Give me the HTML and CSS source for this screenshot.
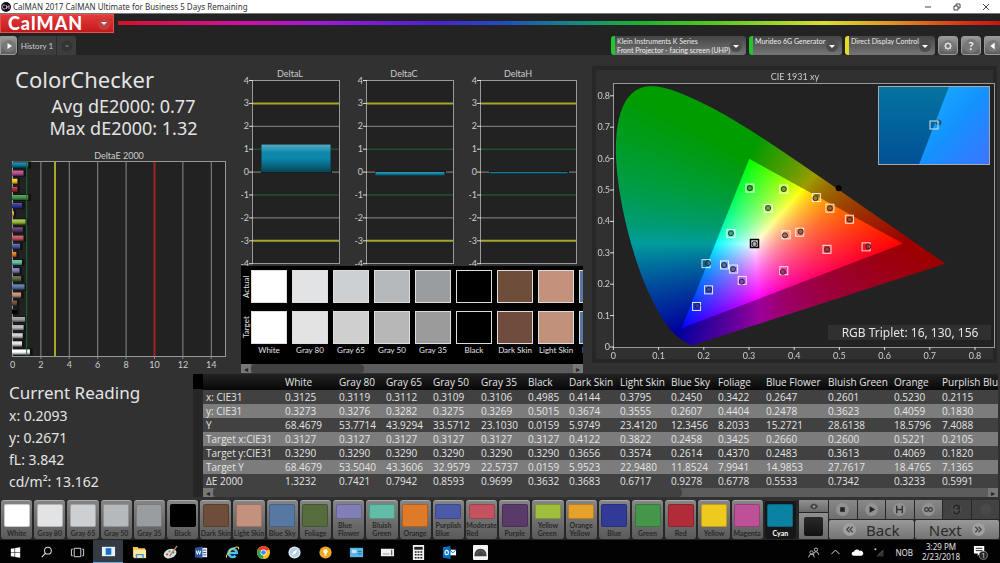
FILE: index.html
```
<!DOCTYPE html>
<html lang="en">
<head>
<meta charset="utf-8">
<title>CalMAN 2017 CalMAN Ultimate for Business 5 Days Remaining</title>
<link rel="stylesheet" href="styles.css">
<script src="charts.js" defer></script>
</head>
<body>
<div class="app">
	<header class="titlebar">
		<svg class="app-icon" viewBox="0 0 10 10"><circle cx="5" cy="5" r="5" fill="#111"/><path d="M4.500 3.500a2 2 0 1 0 0 3M5.500 7V3.500l1.200 2L8 3.500V7" fill="none" stroke="#c9c" stroke-width="1"/></svg>
		<span class="title">CalMAN 2017 CalMAN Ultimate for Business 5 Days Remaining</span>
		<button class="win" aria-label="Minimize"><svg viewBox="0 0 8 8"><path d="M1 4h6"/></svg></button>
		<button class="win" aria-label="Restore"><svg viewBox="0 0 8 8"><path d="M1 3h4v4H1zM3 3V1h4v4H5"/></svg></button>
		<button class="win" aria-label="Close"><svg viewBox="0 0 8 8"><path d="M1 1l6 6M7 1L1 7"/></svg></button>
	</header>

	<div class="brand">
		<button class="logo">CalMAN <i class="caret"></i></button>
		<div class="spectrum"></div>
	</div>

	<nav class="tabs">
		<button class="square small" aria-label="Play"><svg viewBox="0 0 12 12"><circle cx="6" cy="6" r="6" fill="#777"/><path d="M4.500 3L9 6 4.500 9z" fill="#fff"/></svg></button>
		<button class="history">History 1</button>
		<button class="add" aria-label="Add tab"><svg viewBox="0 0 12 12"><circle cx="6" cy="6" r="5.500" fill="#333"/><path d="M4.500 6h3M6 5v2" stroke="#777"/></svg></button>
		<button class="device green wide"><span>Klein Instruments K Series<br>Front Projector - facing screen (UHP)</span><i class="caret"></i></button>
		<button class="device green mid"><span>Murideo 6G Generator</span><i class="caret"></i></button>
		<button class="device yellow"><span>Direct Display Control</span><i class="caret"></i></button>
		<button class="square" aria-label="Settings"><svg viewBox="0 0 14 14"><circle cx="7" cy="7" r="7" fill="#777"/><circle cx="7" cy="7" r="3" fill="none" stroke="#ddd" stroke-width="1.500"/><path d="M7 2.500v2M7 9.500v2M2.500 7h2M9.500 7h2M3.800 3.800l1.300 1.300M8.900 8.900l1.300 1.300M3.800 10.200l1.300-1.300M8.900 5.100l1.300-1.300" stroke="#ddd"/></svg></button>
		<button class="square" aria-label="Help"><b>?</b></button>
		<button class="square last" aria-label="Collapse"><svg viewBox="0 0 14 14"><circle cx="7" cy="7" r="7" fill="#777"/><path d="M9 3v8L4 7z" fill="#fff"/></svg></button>
	</nav>

	<main class="workspace">
		<section class="summary">
			<h1>ColorChecker</h1>
			<p>Avg dE2000: 0.77</p>
			<p>Max dE2000: 1.32</p>
			<svg id="deltaE" viewBox="0 0 241 224"></svg>
		</section>

		<section class="deltas">
			<div class="delta-row">
				<svg id="deltaL" viewBox="0 0 114 200"></svg>
				<svg id="deltaC" viewBox="0 0 114 200"></svg>
				<svg id="deltaH" viewBox="0 0 114 200"></svg>
			</div>
			<div class="compare">
				<div class="sides"><span>Actual</span><span>Target</span></div>
				<div class="pairs" id="pairs"></div>
			</div>
			<div class="scroll"><button aria-label="Scroll left">◂</button><i class="thumb"></i><button aria-label="Scroll right">▸</button></div>
		</section>

		<section class="cie">
			<canvas id="gamut" width="810" height="594"></canvas>
			<svg id="cieOverlay" viewBox="0 0 405 297"></svg>
		</section>
	</main>

	<div class="readings">
		<section class="current">
			<h2>Current Reading</h2>
			<p>x: 0.2093</p>
			<p>y: 0.2671</p>
			<p>fL: 3.842</p>
			<p>cd/m²: 13.162</p>
		</section>
		<div class="gutter"></div>
		<div class="table-wrap">
			<table>
				<colgroup>
					<col class="c82"><col class="c54"><col class="c47"><col class="c47"><col class="c48"><col class="c47"><col class="c41"><col class="c51"><col class="c51"><col class="c47"><col class="c48"><col class="c62"><col class="c66"><col class="c48"><col class="c56">
				</colgroup>
				<thead>
					<tr><th></th><th>White</th><th>Gray 80</th><th>Gray 65</th><th>Gray 50</th><th>Gray 35</th><th>Black</th><th>Dark Skin</th><th>Light Skin</th><th>Blue Sky</th><th>Foliage</th><th>Blue Flower</th><th>Bluish Green</th><th>Orange</th><th>Purplish Blu</th></tr>
				</thead>
				<tbody>
					<tr><th>x: CIE31</th><td>0.3125</td><td>0.3119</td><td>0.3112</td><td>0.3109</td><td>0.3106</td><td>0.4985</td><td>0.4144</td><td>0.3795</td><td>0.2450</td><td>0.3422</td><td>0.2647</td><td>0.2601</td><td>0.5230</td><td>0.2115</td></tr>
					<tr><th>y: CIE31</th><td>0.3273</td><td>0.3276</td><td>0.3282</td><td>0.3275</td><td>0.3269</td><td>0.5015</td><td>0.3674</td><td>0.3555</td><td>0.2607</td><td>0.4404</td><td>0.2478</td><td>0.3623</td><td>0.4059</td><td>0.1830</td></tr>
					<tr><th>Y</th><td>68.4679</td><td>53.7714</td><td>43.9294</td><td>33.5712</td><td>23.1030</td><td>0.0159</td><td>5.9749</td><td>23.4120</td><td>12.3456</td><td>8.2033</td><td>15.2721</td><td>28.6138</td><td>18.5796</td><td>7.4088</td></tr>
					<tr><th>Target x:CIE31</th><td>0.3127</td><td>0.3127</td><td>0.3127</td><td>0.3127</td><td>0.3127</td><td>0.3127</td><td>0.4122</td><td>0.3822</td><td>0.2458</td><td>0.3425</td><td>0.2660</td><td>0.2600</td><td>0.5221</td><td>0.2105</td></tr>
					<tr><th>Target y:CIE31</th><td>0.3290</td><td>0.3290</td><td>0.3290</td><td>0.3290</td><td>0.3290</td><td>0.3290</td><td>0.3656</td><td>0.3574</td><td>0.2614</td><td>0.4370</td><td>0.2483</td><td>0.3613</td><td>0.4069</td><td>0.1820</td></tr>
					<tr><th>Target Y</th><td>68.4679</td><td>53.5040</td><td>43.3606</td><td>32.9579</td><td>22.5737</td><td>0.0159</td><td>5.9523</td><td>22.9480</td><td>11.8524</td><td>7.9941</td><td>14.9853</td><td>27.7617</td><td>18.4765</td><td>7.1365</td></tr>
					<tr><th>ΔE 2000</th><td>1.3232</td><td>0.7421</td><td>0.7942</td><td>0.8593</td><td>0.9699</td><td>0.3632</td><td>0.3683</td><td>0.6717</td><td>0.9278</td><td>0.6778</td><td>0.5533</td><td>0.7342</td><td>0.3233</td><td>0.5991</td></tr>
				</tbody>
			</table>
			<div class="scroll"><button aria-label="Scroll left">◂</button><i class="thumb long"></i><button aria-label="Scroll right">▸</button></div>
		</div>
	</div>

	<footer class="patches">
		<div class="patch-list" id="patchList"></div>
		<div class="preview">
			<button aria-label="Pattern"><svg viewBox="0 0 12 8"><path d="M1 4q5-7 10 0q-5 7-10 0z" fill="#444"/><circle cx="6" cy="4" r="1.500" fill="#999"/></svg></button>
			<button aria-label="Level"><i></i></button>
		</div>
		<div class="transport">
			<div class="keys">
				<button aria-label="Stop"><svg viewBox="0 0 14 14"><circle cx="7" cy="7" r="7" fill="#929292"/><path d="M4.500 4.500h5v5h-5z" fill="#222"/></svg></button>
				<button aria-label="Play"><svg viewBox="0 0 14 14"><circle cx="7" cy="7" r="7" fill="#929292"/><path d="M5 3.500L11 7l-6 3.500z" fill="#222"/></svg></button>
				<button aria-label="Step"><svg viewBox="0 0 14 14"><circle cx="7" cy="7" r="7" fill="#929292"/><path d="M4 3v8M10 3v8M4 7h6" stroke="#333" stroke-width="1.500" fill="none"/></svg></button>
				<button aria-label="Continuous"><svg viewBox="0 0 14 14"><circle cx="7" cy="7" r="7" fill="#929292"/><circle cx="4.800" cy="7" r="2" fill="none" stroke="#333" stroke-width="1.200"/><circle cx="9.200" cy="7" r="2" fill="none" stroke="#333" stroke-width="1.200"/></svg></button>
				<button class="off" aria-label="Refresh"><svg viewBox="0 0 14 14"><circle cx="7" cy="7" r="6" fill="#4a4a4a"/><path d="M4 6a3 3 0 0 1 6-1M10 8a3 3 0 0 1-6 1M10 3v3H7" stroke="#222" stroke-width="1.500" fill="none"/></svg></button>
				<button class="off" aria-label="Record"><svg viewBox="0 0 14 14"><circle cx="7" cy="7" r="6" fill="#494949"/></svg></button>
			</div>
			<div class="steps">
				<button><svg viewBox="0 0 14 14"><circle cx="7" cy="7" r="7" fill="#a0a0a0"/><path d="M7 4L4 7l3 3M10.500 4l-3 3 3 3" stroke="#444" stroke-width="1.300" fill="none"/></svg>Back</button>
				<button>Next<svg viewBox="0 0 14 14"><circle cx="7" cy="7" r="7" fill="#a0a0a0"/><path d="M3.500 4l3 3-3 3M7 4l3 3-3 3" stroke="#444" stroke-width="1.300" fill="none"/></svg></button>
			</div>
		</div>
	</footer>

	<div class="taskbar">
		<button aria-label="Start"><svg viewBox="0 0 16 16"><path d="M3 4l4-.6V7.600H3zM7.600 3.300L13 2.500v5.100H7.600zM3 8.300h4v4.200L3 12zM7.600 8.300H13v5.200l-5.400-.8z" fill="#fff"/></svg></button>
		<button aria-label="Search"><svg viewBox="0 0 16 16"><circle cx="9.500" cy="6" r="3.600" fill="none" stroke="#ddd" stroke-width="1.100"/><path d="M7 8.700L3 13" stroke="#ddd" stroke-width="1.200"/></svg></button>
		<button aria-label="Task view"><svg viewBox="0 0 16 16"><path d="M4.500 3.500h7v9h-7zM3 4.500H1.500v7H3M13 4.500h1.500v7H13" fill="none" stroke="#ddd"/></svg></button>
		<button class="on" aria-label="CalMAN"><svg viewBox="0 0 16 16"><path d="M1 3h14v10H1z" fill="#e6f1f8"/><path d="M5 4.500h6v7H5z" fill="#1470c0"/></svg></button>
		<button aria-label="File Explorer"><svg viewBox="0 0 16 16"><path d="M1 2h5l1 1.500h7V13H1z" fill="#f2c94c"/><path d="M2 5h13v9H2z" fill="#fbe7a1"/><path d="M4 14V9.500h8.500V14H11v-3H5.500v3z" fill="#3d9be0"/></svg></button>
		<button aria-label="Paint"><svg viewBox="0 0 16 16"><ellipse cx="7.500" cy="9" rx="7" ry="4.800" fill="#d8dde0" transform="rotate(-20 8 9)"/><circle cx="4.500" cy="10" r="1.100" fill="#c44"/><circle cx="7" cy="6.800" r="1.100" fill="#4a9"/><circle cx="11" cy="8" r="1.100" fill="#37c"/><path d="M15 1L7 12" stroke="#b98a45" stroke-width="1.500"/></svg></button>
		<button aria-label="Word"><svg viewBox="0 0 16 16"><path d="M8 3h6v10H8z" fill="#eef"/><path d="M9.500 5.500H13M9.500 8H13M9.500 10.500H13" stroke="#2b579a"/><path d="M1 3l8-1.500v13L1 13z" fill="#2b579a"/><path d="M2.500 6l1 4 1.300-4 1.300 4 1-4" stroke="#fff" fill="none"/></svg></button>
		<button aria-label="Internet Explorer"><svg viewBox="0 0 16 16"><path d="M3.500 8.500h9a4.300 4.300 0 1 0-1.200 3" fill="none" stroke="#4cc3f0" stroke-width="2.800"/><path d="M2 13.500C0 11 8 2 13.500 2.200q1.500.3.700 2.300" fill="none" stroke="#f2d14a" stroke-width="1.200"/></svg></button>
		<button aria-label="Chrome"><svg viewBox="0 0 16 16"><circle cx="8" cy="8" r="7" fill="#fbc116"/><path d="M8 8L2 4.500A7 7 0 0 1 14 4.500z" fill="#e33b2e"/><path d="M8 8L2 4.500A7 7 0 0 0 7.500 15z" fill="#31a350"/><circle cx="8" cy="8" r="3.200" fill="#fff"/><circle cx="8" cy="8" r="2.500" fill="#4285f4"/></svg></button>
		<button aria-label="Safari"><svg viewBox="0 0 16 16"><circle cx="8" cy="8" r="6.500" fill="#dbe9f2"/><circle cx="8" cy="8" r="5" fill="#b2cfe2"/><path d="M11.500 4.500L9 9 4.500 11.500 7 7z" fill="#fff"/></svg></button>
		<button aria-label="Tips"><svg viewBox="0 0 16 16"><circle cx="8" cy="8" r="6.500" fill="#f0a722"/><path d="M5.500 7a2.500 2.500 0 1 1 5 0q0 1-1.500 2v2.500H7V9Q5.500 8 5.500 7z" fill="#fff6d8"/></svg></button>
		<button aria-label="Display"><svg viewBox="0 0 16 16"><path d="M1 3h14v10H1z" fill="#5ab4e4"/><path d="M3 5h5v3.500H3z" fill="#bfe6fa"/><path d="M9.500 9.500h4M9.500 7h4" stroke="#1a6da0"/></svg></button>
		<button aria-label="Device"><svg viewBox="0 0 16 16"><path d="M1 4h14v8H1z" fill="#f0f0f0"/><path d="M3 8.500h7v2H3z" fill="#c4c4c4"/><path d="M12.500 5v6" stroke="#333"/></svg></button>
		<button aria-label="Calculator"><svg viewBox="0 0 16 16"><path d="M2 0h12v16H2z" fill="#f2f2f2"/><path d="M3.500 2h9v3h-9z" fill="#222"/><path d="M4 7.500h8M4 10.500h8M4 13.500h8" stroke="#222" stroke-width="1.600" stroke-dasharray="2 1"/></svg></button>
		<button aria-label="Outlook"><svg viewBox="0 0 16 16"><path d="M8 5h7v6H8z" fill="#fff"/><path d="M8 5l3.500 3.500L15 5" fill="none" stroke="#0072c6"/><path d="M1 2.500L9 1v14l-8-1.500z" fill="#0072c6"/><ellipse cx="5" cy="8" rx="1.800" ry="2.300" fill="none" stroke="#fff" stroke-width="1.200"/></svg></button>
		<button aria-label="Meter"><svg viewBox="0 0 16 16"><rect x="0" y="0" width="16" height="16" rx="1" fill="#f4f4f4"/><path d="M1.500 12q0-8 6.500-8t6.500 8z" fill="#3f4346"/><path d="M4 10q1-4 4-4t4 4" fill="none" stroke="#666"/></svg></button>
		<div class="tray">
			<svg viewBox="0 0 16 16"><circle cx="11" cy="4.500" r="2" fill="none" stroke="#ddd"/><path d="M8 11q0-4 3-4t3.500 4" fill="none" stroke="#ddd"/><circle cx="5.500" cy="8" r="2" fill="none" stroke="#ddd"/><path d="M2 14q.5-4 3.500-4T9 14" fill="none" stroke="#ddd"/></svg>
			<svg viewBox="0 0 16 16"><path d="M3 10l5-5 5 5" fill="none" stroke="#ddd" stroke-width="1.200"/></svg>
			<svg viewBox="0 0 16 16"><path d="M3 12a2.500 2.500 0 0 1 .5-5 4 4 0 0 1 7-1 3 3 0 0 1 2.500 6z" fill="#fff"/></svg>
			<svg viewBox="0 0 16 16"><circle cx="3" cy="4" r="1.300" fill="#ccc"/><path d="M13 4v9H4z" fill="#333"/><path d="M6 12q2-5 7-6" fill="none" stroke="#555"/></svg>
			<span class="lang">NOB</span>
			<span class="clock">3:29 PM<br>2/23/2018</span>
			<svg class="note" viewBox="0 0 16 16"><path d="M1 1h11v8H7l-2 3V9H1z" fill="#fff"/><path d="M3 3.500h7M3 6h7" stroke="#222"/><circle cx="11" cy="11" r="4.300" fill="#222" stroke="#888"/><text x="11" y="14" text-anchor="middle" fill="#ddd" font-size="8">1</text></svg>
		</div>
	</div>
</div>
</body>
</html>
```
FILE: styles.css
```
*{ box-sizing:border-box;}
body{ margin:0; background:#000; color:#e4e4e4; font-family:"Noto Sans","Open Sans",sans-serif; font-size:11px;}
button{ margin:0; padding:0; border:0; background:none; color:inherit; font:inherit;}
h1,h2,p{ margin:0; font-weight:400;}
svg{ display:block;}
.app{ min-height:100vh; display:flex; flex-direction:column; overflow:hidden; background:#313131;}

/* title bar */
.titlebar{ height:14px; display:flex; align-items:center; background:#fff; color:#333; font-size:8px; border-bottom:1px solid #777;}
.app-icon{ width:10px; height:10px; margin:0 2px 0 1px;}
.title{ flex:1; font-family:"Noto Sans",sans-serif; font-size:8px;}
.win{ width:29px;}
.win svg{ width:8px; height:8px; margin:0 auto; fill:none; stroke:#444;}

.brand{ height:21px; display:flex; align-items:flex-start; background:#232323;}
.logo{ width:114px; height:19px; padding:0 3px 0 7px; display:flex; align-items:center; justify-content:space-between; background:linear-gradient(#e33a3a,#c31a1e); border:1px solid #e25050; color:#fff; font-family:Lato,sans-serif; font-weight:900; font-size:18px; line-height:17px; letter-spacing:1px;}
.spectrum{ flex:1; height:4px; margin:7px 0 0 4px; background:linear-gradient(90deg,#d8102a,#d010a0 14%,#a818d8 22%,#4a22d0 36%,#1e50c0 44%,#178a80 52%,#1db032 59%,#58c820 68%,#d8e030 80%,#e09020 88%,#d83018 96%,#c81414);}
.caret{ width:12px; height:12px; flex:none; display:grid; place-items:center; border-radius:50%; background:#4c4c4c;}
.caret:before{ content:""; border:3px solid transparent; border-top-color:#fff; border-bottom:0;}
.logo .caret{ background:#c44040;}

/* tab row */
.tabs{ height:20px; padding-top:1px; display:flex; background:#232323; font-family:Lato,sans-serif;}
.square{ width:20px; height:19px; margin-left:3px; display:grid; place-items:center; background:linear-gradient(#999,#5c5c5c); border:1px solid #999; border-radius:3px; color:#eee; font-size:12px; line-height:14px;}
.square svg{ width:12px; height:12px;}
.square.small{ width:17px; margin:0; border-radius:0 3px 3px 0;}
.square.last{ width:16px; border-right:0; border-radius:3px 0 0 3px;}
.square b{ width:14px; height:14px; border-radius:50%; background:#777; text-align:center;}
.history{ width:38px; margin-left:1px; background:#3d3d3d; border-radius:3px 0 0 0; color:#ccc; font-size:8px;}
.add{ width:20px; margin-right:auto; background:#3d3d3d; border-left:1px solid #2c2c2c; border-radius:0 3px 0 0;}
.add svg{ width:12px; height:12px; margin:auto;}
.device{ width:90px; margin-left:3px; padding:1px 4px 0 2px; display:flex; justify-content:space-between; align-items:center; background:linear-gradient(#444,#767676); border-left:4px solid; border-radius:3px; color:#eee; font-size:7px; line-height:9px; text-align:left; white-space:nowrap;}
.device span{ align-self:flex-start;}
.device.wide{ width:135px;}
.device.mid{ width:93px;}
.device.green{ border-color:#22c52c;}
.device.yellow{ border-color:#e2dc28;}

/* charts */
.workspace{ display:grid; grid-template-columns:241fr 342fr 417fr; background:#313131;}
.summary{ padding-top:8px;}
.summary h1{ padding-left:15px; font-size:22px; line-height:32px;}
.summary p{ text-align:center; padding-left:6px; font-size:18px; line-height:22px;}
.summary svg{ width:100%; margin-top:11px;}
.deltas{ padding-top:11px; min-width:0;}
.delta-row{ display:flex;}
.delta-row svg{ flex:1; min-width:0;}
.compare{ display:flex; height:98px; overflow:hidden; background:#000; font-family:Lato,sans-serif; font-size:8px;}
.sides{ width:10px; flex:none; display:flex; flex-direction:column; gap:8px; padding-top:4px;}
.sides span{ height:33px; line-height:10px; text-align:center; writing-mode:vertical-rl; transform:rotate(180deg);}
.pairs{ display:flex; gap:5px; padding-top:4px;}
.pair{ width:36px; flex:none; display:grid; grid-template-rows:33px 33px 12px; row-gap:8px; white-space:nowrap;}
.pair i{ border:1px solid #ddd;}
.pair span{ justify-self:center; margin-top:-8px; line-height:12px;}
.scroll{ height:9px; display:flex; background:#5c5c5c; border-radius:2px;}
.scroll button{ width:10px; line-height:8px; font-size:8px; background:#777; color:#222;}
.scroll button:last-child{ margin-left:auto;}
.thumb{ width:33%; background:#414141; border-radius:4px;}
.thumb.long{ width:59%;}
.cie{ position:relative; align-self:start; margin:11px 3px 0 9px; background:#303030; box-shadow:inset 0 0 0 4px #272727;}
.cie canvas{ display:block; width:100%;}
.cie svg{ position:absolute; left:0; top:0; width:100%; height:100%;}

.frame{ fill:#222; stroke:#999; stroke-width:1;}
.grid{ stroke:#8a8a8a; stroke-width:1;}
.tick{ stroke:#ddd; stroke-width:1;}
.limit1{ stroke:#1d6a2a; stroke-width:1;}
.limit3{ stroke:#a8a42c; stroke-width:2;}
.limit10{ stroke:#a32222; stroke-width:2;}
.label{ fill:#ccc; font-size:9px; font-family:Lato,sans-serif;}
.end{ text-anchor:end;}
.middle{ text-anchor:middle;}

/* readings */
.readings{ display:flex; padding-bottom:3px; background:#313131;}
.current{ width:193px; padding:8px 0 0 9px;}
.current h2{ font-size:17px; line-height:22px;}
.current p{ font-size:14px; line-height:22px;}
.current h2 + p{ margin-top:1px;}
.gutter{ width:10px; background:linear-gradient(#000 15px,#262626 15px);}
.table-wrap{ flex:1; min-width:0; padding-right:2px;}
table{ width:100%; table-layout:fixed; border-collapse:collapse; font-family:"Open Sans",sans-serif; font-size:10px;}
th,td{ height:14px; padding:0; line-height:14px; font-weight:400; text-align:left; white-space:nowrap; overflow:hidden;}
tbody th{ padding-left:3px;}
thead tr{ background:linear-gradient(#222,#080808);}
thead th{ height:16px; line-height:16px; overflow:visible;}
tbody tr{ background:#414141;}
tbody tr:nth-child(even){ background:#7c7c7c;}
.c41{ width:41px;} .c47{ width:47px;} .c48{ width:48px;} .c51{ width:51px;} .c54{ width:54px;}
.c56{ width:56px;} .c62{ width:62px;} .c66{ width:66px;} .c82{ width:82px;}

/* patches */
.patches{ flex:none; height:40px; display:flex; background:#262626; color:#2a2a2a;}
.patch-list{ flex:1; min-width:0; display:grid; grid-template-columns:repeat(24,minmax(0,1fr)); column-gap:2px; padding:0 2px 0 1px; font-family:Lato,sans-serif; font-weight:700; font-size:7px; line-height:8px;}
.patch{ height:39px; padding:3px 0 2px; display:flex; flex-direction:column; align-items:center; overflow:hidden; background:linear-gradient(#858585,#5a5a5a); border-top:1px solid #aaa; border-radius:3px;}
.patch i{ width:26px; flex:1; border:1px solid rgba(0,0,0,.2); border-radius:2px;}
.patch span{ padding-top:2px; text-align:left;}
.patch.current-patch{ background:#171717; border-color:#333; color:#fff;}
.preview{ width:30px; display:grid; grid-template-rows:12px 26px; padding-left:1px; row-gap:1px;}
.preview button{ display:grid; place-items:center; background:linear-gradient(#909090,#6a6a6a);}
.preview svg{ width:10px; height:7px;}
.preview i{ width:19px; height:19px; background:linear-gradient(#2a2a2a,#111); border-radius:2px;}
.transport{ width:172px; padding:0 1px;}
.keys{ height:19px; display:grid; grid-template-columns:repeat(6,1fr); column-gap:1px;}
.keys button{ display:grid; place-items:center; background:linear-gradient(#888,#6e6e6e);}
.keys .off{ background:#424242;}
.keys svg{ width:13px; height:13px;}
.steps{ height:19px; margin-top:1px; display:grid; grid-template-columns:1fr 1fr; column-gap:1px;}
.steps button{ display:flex; align-items:center; justify-content:center; gap:10px; background:linear-gradient(#999,#747474); border-radius:2px; font-size:15px; line-height:18px;}
.steps svg{ width:13px; height:13px;}

/* taskbar */
.taskbar{ height:24px; flex:1 0 24px; display:flex; background:#020202;}
.taskbar button{ width:30px; margin-right:1px; flex:0 1 auto; display:grid; place-items:center;}
.taskbar button svg{ width:15px; height:15px;}
.taskbar .on{ background:#333a42; border-bottom:2px solid #6aaede;}
.tray{ margin-left:auto; display:flex; align-items:center; gap:9px; padding-right:12px; font-size:8px;}
.tray svg{ width:13px; height:13px;}
.clock{ width:38px; text-align:center; line-height:10px; font-size:8px; margin-right:4px;}
.tray .note{ width:15px; height:15px;}
```
FILE: charts.js
```
// name, actual, target, dE2000
var patches=[
	["White","#ffffff","#ffffff",1.3232],
	["Gray 80","#e2e3e5","#e3e3e3",.7421],
	["Gray 65","#cdd0d3","#cfcfcf",.7942],
	["Gray 50","#b5b9bc","#b7b7b7",.8593],
	["Gray 35","#999d9f","#9b9b9b",.9699],
	["Black","#000000","#000000",.3632],
	["Dark Skin","#6f4d3b","#704c3e",.3683],
	["Light Skin","#c4917c","#c2917b",.6717],
	["Blue Sky","#5878a4","#5879a5",.9278],
	["Foliage","#566c3c","#566c3e",.6778],
	["Blue Flower","#827fb8","#827fb8",.5533],
	["Bluish Green","#62bda8","#62bda8",.7342],
	["Orange","#de7a28","#de7a28",.3233],
	["Purplish Blue","#4a5aa8","#4a5aa8",.5991],
	["Moderate Red","#c5525f","#c5525f",.85],
	["Purple","#5a3a6b","#5a3a6b",.8],
	["Yellow Green","#9fbe3e","#9fbe3e",1],
	["Orange Yellow","#e6a02c","#e6a02c",.15],
	["Blue","#323a98","#323a98",.75],
	["Green","#45964a","#45964a",1.2],
	["Red","#b12c38","#b12c38",.4],
	["Yellow","#eec91e","#eec91e",.4],
	["Magenta","#bd5096","#bd5096",.85],
	["Cyan","#0b82a2","#10829c",1.2]
];

// target x, y, actual x, y
var points=[
	[.4122,.3656,.4144,.3674],[.3822,.3574,.3795,.3555],[.2458,.2614,.2450,.2607],
	[.3425,.4415,.3422,.4425],[.2660,.2483,.2647,.2478],[.2600,.3613,.2601,.3623],
	[.5221,.4069,.5230,.4059],[.2105,.1820,.2115,.1830],[.4726,.3110,.4726,.3110],
	[.2850,.2120,.2840,.2080],[.3770,.5030,.3770,.5030],[.4790,.4420,.4790,.4420],
	[.1840,.1290,.1860,.1310],[.3020,.5060,.3020,.5060],[.5590,.3190,.5640,.3200],
	[.4490,.4760,.4470,.4740],[.3770,.2430,.3750,.2390],[.2049,.2653,.2093,.2671]
];

var locus=[[.1741,.005],[.1714,.0051],[.1644,.0109],[.1566,.0177],[.144,.0297],[.1241,.0578],[.1096,.0868],
	[.0913,.1327],[.0687,.2007],[.0454,.295],[.0235,.4127],[.0082,.5384],[.0039,.6548],[.0139,.7502],
	[.0389,.812],[.0743,.8338],[.1142,.8262],[.1547,.8059],[.2296,.7543],[.3016,.6923],[.3731,.6245],
	[.4441,.5547],[.5125,.4866],[.5752,.4242],[.627,.3725],[.6915,.3083],[.7347,.2653]];

function byId(id){ return document.getElementById(id); }
function line(cls,x1,y1,x2,y2)
{
	return '<line class="'+cls+'" x1="'+x1+'" y1="'+y1+'" x2="'+x2+'" y2="'+y2+'"/>';
}
function text(cls,x,y,s)
{
	return '<text class="label '+cls+'" x="'+x+'" y="'+y+'">'+s+'</text>';
}

function drawDeltaE()
{
	var s='<defs><linearGradient id="shade" x2="0" y2="1"><stop stop-color="#fff" stop-opacity=".3"/><stop offset=".3" stop-color="#fff" stop-opacity="0"/><stop offset=".5" stop-color="#000" stop-opacity="0"/><stop offset="1" stop-color="#000" stop-opacity=".5"/></linearGradient></defs>';
	var step=14.2;
	s+='<rect class="frame" x="12.5" y="11.500" width="213" height="195"/>'+text("middle",119,9,"DeltaE 2000");
	for(var i=0;i<=14;i+=2)
	{
		if(i) s+=line("grid",12.5+i*step,11,12.5+i*step,209);
		s+=text("middle",12.5+i*step,218,i);
	}
	for(var j=0;j<24;j++)
	{
		var p=patches[23-j], y=12.5+j*8.13;
		s+='<rect x="13" y="'+(y-1)+'" width="'+(p[3]*step+1)+'" height="7" fill="#111"/>';
		s+='<rect x="12" y="'+y+'" width="'+p[3]*step*.95+'" height="5" fill="'+p[1]+'"/>';
		s+='<rect x="12" y="'+y+'" width="'+p[3]*step*.95+'" height="5" fill="url(#shade)"/>';
	}
	s+=line("limit1",26.7,12,26.7,206)+line("limit3",55,12,55,206)+line("limit10",154.5,12,154.5,206);
	byId("deltaE").innerHTML=s;
}

function drawDelta(id,title,w,v)
{
	var top=14.5, step=22.9, zero=top+4*step, s='';
	s+='<rect class="frame" x="11.5" y="14.5" width="'+w+'" height="183"/>';
	s+=text("middle",49,11,title);
	for(var i=-4;i<=4;i++)
	{
		var y=zero-i*step, a=Math.abs(i);
		s+=line("tick",8,y,12,y)+text("end",8,y+3,i);
		if(a<4) s+=line(a==3?"limit3":a==1?"limit1":"grid",12,y,11+w,y);
	}
	var h=Math.abs(v)*step, y0=v>0?zero-h:zero;
	s+='<rect x="20" y="'+(zero-1)+'" width="'+(w-16)+'" height="2" fill="#151515"/>';
	s+='<rect x="20.5" y="'+y0+'" width="'+(w-18)+'" height="'+h+'" fill="#0b88ac"/>';
	s+='<rect x="20.5" y="'+y0+'" width="'+(w-18)+'" height="'+h+'" fill="url(#shade)"/>';
	byId(id).innerHTML=s;
}

function px(x){ return 21.4+452*x; }
function py(y){ return 281-314*y; }

function side(x,y,a,b){ return (b[0]-a[0])*(y-a[1])-(b[1]-a[1])*(x-a[0]); }

function drawGamut()
{
	var c=byId("gamut"), g=c.getContext("2d"), img=g.createImageData(c.width,c.height);
	var R=[.64,.33], G=[.3,.6], B=[.15,.06];
	for(var j=0;j<c.height;j++)
	{
		for(var i=0;i<c.width;i++)
		{
			var x=(i/2-21.4)/452, y=(281-j/2)/314, z=1-x-y;
			var rgb=[3.2406*x-1.5372*y-.4986*z, -.9689*x+1.8758*y+.0415*z, .0557*x-.204*y+1.057*z];
			var inside=side(x,y,R,G)>0 && side(x,y,G,B)>0 && side(x,y,B,R)>0;
			var m=Math.max(rgb[0],rgb[1],rgb[2]), k=(j*c.width+i)*4;
			for(var n=0;n<3;n++)
			{
				img.data[k+n]=255*(inside?1:.61)*Math.pow(Math.max(0,rgb[n]/m),.85);
			}
			img.data[k+3]=255;
		}
	}
	g.putImageData(img,0,0);
	// keep only what lies inside the spectral locus
	g.globalCompositeOperation="destination-in";
	g.scale(2,2);
	g.beginPath();
	g.moveTo(px(locus[0][0]),py(locus[0][1]));
	for(var l=1;l<locus.length-1;l++)
	{
		var p=locus[l], q=locus[l+1];
		g.quadraticCurveTo(px(p[0]),py(p[1]),px((p[0]+q[0])/2),py((p[1]+q[1])/2));
	}
	g.lineTo(px(.7347),py(.2653));
	g.closePath();
	g.fill();
	g.globalCompositeOperation="destination-over";
	g.fillStyle="#222";
	g.fillRect(21,17,381,264);
}

function drawOverlay()
{
	var s='<defs><linearGradient id="dim" x2="0" y2="1"><stop stop-color="#0474a0"/><stop offset="1" stop-color="#025096"/></linearGradient><linearGradient id="lit" x2="1" y2="1"><stop stop-color="#14b4ff"/><stop offset=".5" stop-color="#1492ff"/><stop offset="1" stop-color="#3c74ff"/></linearGradient></defs>';
	s+='<rect x="21.5" y="17.5" width="381" height="264" fill="none" stroke="#999"/>';
	s+=text("middle",203,14,"CIE 1931 xy");
	for(var i=0;i<=8;i++)
	{
		var v=i?"0."+i:"0";
		s+=text("middle",px(i/10),293,v)+line("tick",px(i/10),281,px(i/10),284);
		s+=text("end",18,py(i/10)+3,v)+line("tick",18,py(i/10),22,py(i/10));
	}
	for(var j=0;j<points.length;j++)
	{
		var p=points[j];
		s+='<rect x="'+(px(p[0])-4)+'" y="'+(py(p[1])-4)+'" width="8" height="8" fill="none" stroke="#fff" stroke-opacity=".85"/>';
		s+='<circle cx="'+px(p[2])+'" cy="'+py(p[3])+'" r="2.500" fill="#444" fill-opacity=".5" stroke="#222" stroke-opacity=".9"/>';
	}
	s+='<rect x="158.500" y="173.500" width="8" height="8" fill="#ddd" stroke="#000" stroke-width="1.500"/><circle cx="162.500" cy="178" r="2.500" fill="#aaa" stroke="#222"/>';
	s+='<circle cx="'+px(.4985)+'" cy="'+py(.5055)+'" r="3" fill="#000"/>';
	s+='<rect x="286.500" y="20.500" width="111" height="78" fill="url(#dim)"/><path d="M357 20.500h40.500v78H327z" fill="url(#lit)"/><rect x="286.500" y="20.500" width="111" height="78" fill="none" stroke="#aaa"/>';
	s+='<circle cx="346.500" cy="56.500" r="2.500" fill="#2a6f90" stroke="#134c66"/><rect x="338" y="55" width="8" height="8" fill="none" stroke="#cfe6f4"/>';
	s+='<rect x="236" y="259" width="163" height="15" fill="#303030"/><text class="middle" x="318" y="271" font-size="12" fill="#e4e4e4">RGB Triplet: 16, 130, 156</text>';
	byId("cieOverlay").innerHTML=s;
}

function fillPatches()
{
	var pairs='', list='';
	for(var i=0;i<patches.length;i++)
	{
		var p=patches[i];
		if(i<9) pairs+='<div class="pair"><i style="background:'+p[1]+'"></i><i style="background:'+p[2]+'"></i><span>'+p[0]+'</span></div>';
		// from Blue Flower on, two-word names break onto a second line
		var name=i<10?p[0]:p[0].replace(" ","<br>");
		list+='<button class="patch'+(i==23?' current-patch':'')+'"><i style="background:'+p[1]+'"></i><span>'+name+'</span></button>';
	}
	byId("pairs").innerHTML=pairs;
	byId("patchList").innerHTML=list;
}

drawDeltaE();
drawDelta("deltaL","DeltaL",87,1.2);
drawDelta("deltaC","DeltaC",87,-.14);
drawDelta("deltaH","DeltaH",96,-.06);
drawGamut();
drawOverlay();
fillPatches();
```
